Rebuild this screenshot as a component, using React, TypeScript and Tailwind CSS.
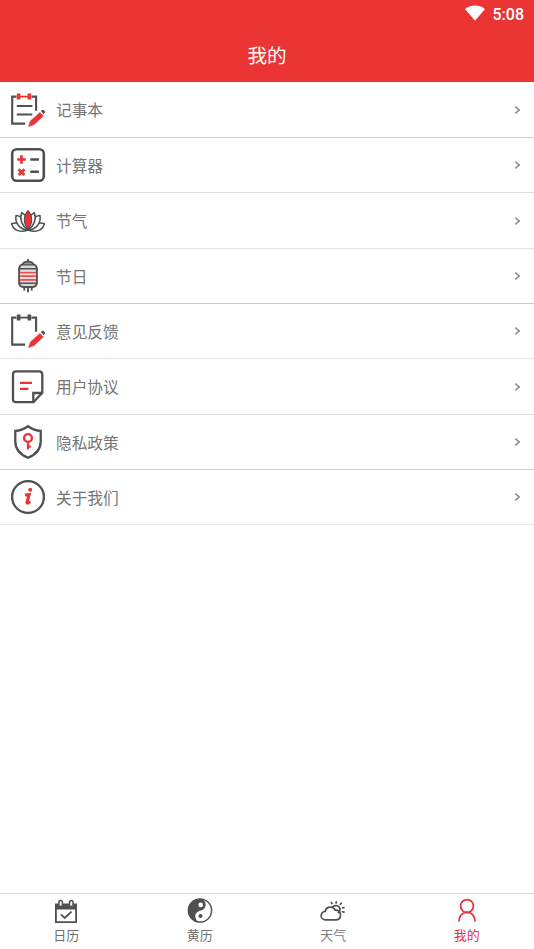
import React from "react";

const DARK = "#505052";
const RED = "#e93436";

function Pencil() {
  return (
    <>
      <path d="M18.6 34.4l1.8-5.400 9.600-8.600 3.300 3.500-9.300 8.700z" fill={RED} stroke={RED} strokeWidth=".6" />
      <path d="M30.800 19l1.400-1.100c1.300-.5 3.200 1.400 2.700 2.700l-1.100 1.600z" fill={DARK} />
    </>
  );
}

function Notebook({ lined }: { lined: boolean }) {
  const clip = lined ? RED : DARK;
  return (
    <>
      <path d="M6.500 4.600H2.200v27h13M21.500 4.600h4.600v14.200" fill="none" stroke={DARK} strokeWidth="2.100" />
      <path d="M10 4.600h8.500" stroke={clip} strokeWidth="1.800" />
      <path d="M8.600 1.600v6M19.400 1.600v6" stroke={clip} strokeWidth="3.600" />
      {lined && <path d="M6.800 14.100h15.600M6.800 22.500h15.600" stroke={DARK} strokeWidth="2" />}
      <Pencil />
    </>
  );
}

function Calculator() {
  return (
    <>
      <rect x="2.200" y="2.200" width="31.600" height="31.600" rx="4.500" fill="none" stroke={DARK} strokeWidth="2.600" />
      <path d="M7.200 12.500h8.600M11.500 8.300v8.400M8.600 22.200l5.900 5.800M14.500 22.200l-5.900 5.800" stroke={RED} strokeWidth="2.700" />
      <path d="M20.300 12.500h8.600M20.300 24.800h8.600" stroke={DARK} strokeWidth="2.400" />
    </>
  );
}

function Lotus() {
  return (
    <g fill="#fff" stroke={DARK} strokeWidth="1.500" strokeLinejoin="round">
      <path d="M17.500 27.300C11 29.500 3.500 28.200 1.700 20.700c5.300-2.200 11.800.6 15.800 6.600z" />
      <path d="M18.500 27.300c6.500 2.200 14 .9 15.800-6.600-5.300-2.200-11.800.6-15.800 6.600z" />
      <path d="M17.500 27C9.500 26 4.800 20 6 12.600 12.500 13 17 19.500 17.500 27z" />
      <path d="M18.500 27C26.500 26 31.200 20 30 12.600 23.500 13 19 19.500 18.500 27z" />
      <path d="M17.700 26.500C11.500 22.500 9.300 15.500 11.800 9.600c4.500 2.400 6.700 8.900 5.900 16.900z" />
      <path d="M18.300 26.500c6.200-4 8.400-11 5.900-16.900-4.500 2.400-6.700 8.900-5.900 16.900z" />
      <path d="M18 25.800c-4.900-4.800-4.900-13.200 0-18.200 4.900 5 4.900 13.400 0 18.200z" fill={RED} strokeWidth="1.100" />
    </g>
  );
}

function Lantern() {
  return (
    <>
      <rect x="9.200" y="6.500" width="17.600" height="22.500" rx="4" fill="#d9dad7" stroke={DARK} strokeWidth="2.100" />
      <path d="M10.200 14.600h15.600M10.200 18h15.600M10.200 21.500h15.600" stroke="#fbe3e1" strokeWidth="4" />
      <path d="M10.200 14.600h15.600M10.200 18.200h15.600M10.200 21.800h15.600" stroke="#ee4a4b" strokeWidth="1.800" />
      <path d="M9.500 10.800h17M9.500 25.300h17" stroke={DARK} strokeWidth="1.500" />
      <path d="M13 6.300c0-2 1.800-2.700 5-2.700s5 .7 5 2.700" fill="#999" stroke={DARK} strokeWidth="1.800" />
      <path d="M18 1v2.500M14.300 29v3.500M18 29v5.200M21.700 29v3.500" stroke={DARK} strokeWidth="1.900" />
    </>
  );
}

function Agreement() {
  return (
    <>
      <path d="M6 2.300h23q3.300 0 3.300 3.300v18.200l-8.800 9.400H6q-3 0-3-3V5.300q0-3 3-3z" fill="none" stroke={DARK} strokeWidth="2.300" />
      <path d="M32 24h-8.700v9" fill="none" stroke={DARK} strokeWidth="2.300" />
      <path d="M10 13.900h12M10 19.900h8.400" stroke={RED} strokeWidth="2.200" />
    </>
  );
}

function Shield() {
  return (
    <>
      <path d="M18 2.300c3.800 2.800 8 4.400 12.700 4.600v10.500C30.700 25 26 30.400 18 33.700 10 30.400 5.300 25 5.300 17.400V6.900C10 6.700 14.200 5.100 18 2.300z" fill="none" stroke={DARK} strokeWidth="2.300" />
      <circle cx="18" cy="14" r="3.900" fill="none" stroke={RED} strokeWidth="2.400" />
      <path d="M18 17.500v8M18 22.600h2.800" stroke={RED} strokeWidth="2.200" />
    </>
  );
}

function About() {
  return (
    <>
      <circle cx="18" cy="18" r="15.900" fill="none" stroke={DARK} strokeWidth="2.300" />
      <circle cx="20.200" cy="10.700" r="2" fill={RED} />
      <path d="M15 16.100l4.200-.6-2.200 7.500c-.3 1.700 1 1.500 3.200-.5" fill="none" stroke={RED} strokeWidth="3" />
    </>
  );
}

const rows = [
  { label: "记事本", icon: <Notebook lined />, size: "h-14 border-[#cfcfcf]" },
  { label: "计算器", icon: <Calculator />, size: "h-[55px] border-[#dedede]" },
  { label: "节气", icon: <Lotus />, size: "h-14 border-[#e5e5e5]" },
  { label: "节日", icon: <Lantern />, size: "h-[55px] border-[#cbcbcb]" },
  { label: "意见反馈", icon: <Notebook lined={false} />, size: "h-[55px] border-[#e5e5e5]" },
  { label: "用户协议", icon: <Agreement />, size: "h-14 border-[#dedede]" },
  { label: "隐私政策", icon: <Shield />, size: "h-[55px] border-[#cfcfcf]" },
  { label: "关于我们", icon: <About />, size: "h-[55px] border-[#e5e5e5]" },
];

function CalendarIcon() {
  return (
    <>
      <path d="M3 5.500h22v6H3z" fill={DARK} />
      <path d="M3.900 8v16.200h20.200V8" fill="none" stroke={DARK} strokeWidth="1.800" />
      <path d="M7 7.500V4.300q0-1.900 1.700-1.900t1.700 1.900v3.200M17.600 7.500V4.300q0-1.900 1.700-1.900t1.700 1.900v3.200" fill="#fff" stroke={DARK} strokeWidth="1.500" />
      <path d="M9 16.300l3.700 3.600 6.800-6.300" fill="none" stroke={DARK} strokeWidth="1.800" />
    </>
  );
}

function TaijiIcon() {
  return (
    <>
      <circle cx="14" cy="12.500" r="11.600" fill="#fff" stroke={DARK} strokeWidth="1.500" />
      <path d="M14 .9a5.800 5.800 0 0 1 1 11.500c-4 .7-7 3.600-5.200 8.100.6 1.700 2 2.900 3.700 3.600A11.600 11.600 0 0 1 14 .9z" fill={DARK} />
      <circle cx="14.700" cy="6.900" r="2.300" fill="#fff" />
      <circle cx="14.500" cy="18" r="2" fill={DARK} />
    </>
  );
}

function WeatherIcon() {
  return (
    <g fill="none" stroke={DARK} strokeWidth="1.700" strokeLinecap="round">
      <path d="M6.500 21.800a4.200 4.200 0 0 1-.3-8.400C7 8.500 14 7.200 16.200 12.200c3.300-.3 5.300 2 5.300 4.700 0 2.900-2 4.900-5 4.900z" />
      <path d="M13.500 9.300c2-3 7.500-1.800 7.500 2.200 0 1.300-.7 2.300-1.600 3" />
      <path d="M17.200 5V3.800M13 5.600l-.6-1.200M21.300 6.300l.9-1.100M23.600 9.900l1.400-.4M23.500 13.700l1.500.4" />
    </g>
  );
}

function PersonIcon() {
  return (
    <g fill="none" stroke={RED} strokeWidth="1.800">
      <circle cx="14" cy="8" r="6.400" />
      <path d="M5.900 23.600c0-5.600 3.300-9.200 8.100-9.200s8.100 3.600 8.100 9.200" />
    </g>
  );
}

const tabs = [
  { label: "日历", icon: <CalendarIcon />, tone: "pr-px text-[#707070]" },
  { label: "黄历", icon: <TaijiIcon />, tone: "pr-px text-[#707070]" },
  { label: "天气", icon: <WeatherIcon />, tone: "pr-px text-[#808080]" },
  { label: "我的", icon: <PersonIcon />, tone: "pr-px text-[#e93436]" },
];

export default function App() {
  return (
    <div className="flex h-[949px] w-[534px] flex-col overflow-hidden bg-white font-['Noto_Sans_CJK_SC',sans-serif]">
      <header className="flex h-[82px] shrink-0 flex-col bg-[#ea3534] text-white">
        <div className="flex h-7 items-center justify-end gap-2 pr-2.5">
          <svg width="20" height="16" viewBox="0 0 20 16" className="-mt-0.5">
            <path d="M0 3.900C5.800-.7 14.200-.7 20 3.900L10 15.800z" fill="#fff" />
          </svg>
          <span className="pt-0.5 font-['Roboto',sans-serif] text-base leading-7 font-medium">5:08</span>
        </div>
        <h1 className="flex h-[54px] items-center justify-center text-[19.600px] leading-[54px]">我的</h1>
      </header>
      <main className="flex-1">
        {rows.map((row) => (
          <div key={row.label} className={`flex items-center border-b pr-3 pl-2.5 ${row.size}`}>
            <svg width="36" height="36" viewBox="0 0 36 36" className="shrink-0">{row.icon}</svg>
            <span className="ml-2.5 flex-1 text-[15.700px] leading-[25px] text-[#757575]">{row.label}</span>
            <svg width="9" height="10" viewBox="0 0 9 10" fill="none" stroke="#8c8c8c" strokeWidth="1.600">
              <path d="M2.300 1.600L6.200 5 2.300 8.400" />
            </svg>
          </div>
        ))}
      </main>
      <nav className="flex h-14 shrink-0 border-t border-[#d8d8d8]">
        {tabs.map((tab) => (
          <div key={tab.label} className={`flex flex-1 flex-col items-center pt-1 ${tab.tone}`}>
            <svg width="28" height="26" viewBox="0 0 28 26">{tab.icon}</svg>
            <span className="text-[13px] leading-[21px]">{tab.label}</span>
          </div>
        ))}
      </nav>
    </div>
  );
}
